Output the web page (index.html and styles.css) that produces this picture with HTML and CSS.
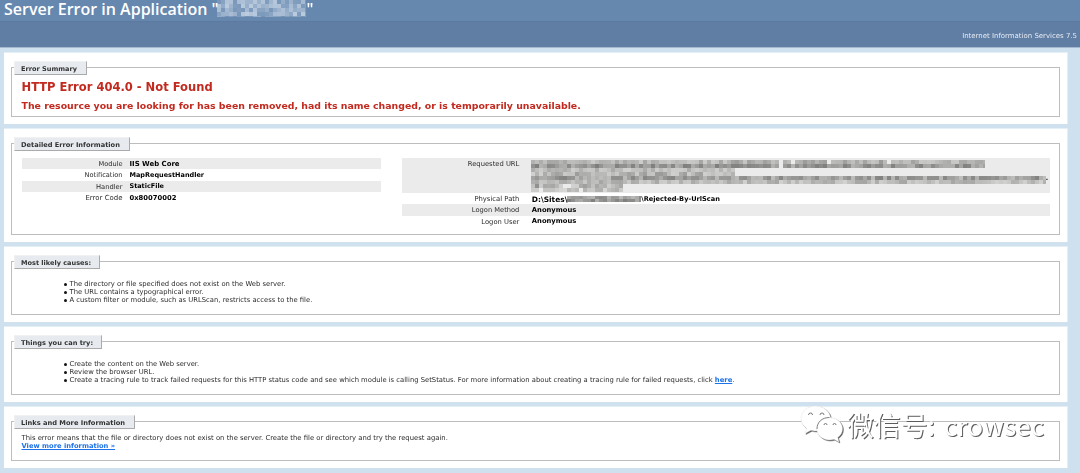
FILE: index.html
```html
<!DOCTYPE html>
<html lang="en">
<head>
<meta charset="utf-8">
<title>IIS 7.5 Detailed Error - 404.0 - Not Found</title>
<link rel="stylesheet" href="styles.css">
</head>
<body>
<header class="title"><h1><span class="fit" data-w="203.5">Server Error in Application</span> <span class="q">"</span><canvas class="mosaic" data-kind="title" width="89" height="17"></canvas><span class="q">"</span></h1></header>
<div class="server"><span class="fit" data-w="115">Internet Information Services 7.5</span></div>
<main>
<section class="panel summary"><div class="box"><h2 class="legend w1"><span class="fit" data-w="56">Error Summary</span></h2>
<h3><span class="fit" data-w="191">HTTP Error 404.0 - Not Found</span></h3>
<h4><span class="fit" data-w="560">The resource you are looking for has been removed, had its name changed, or is temporarily unavailable.</span></h4>
</div></section>
<section class="panel details"><div class="box"><h2 class="legend w2"><span class="fit" data-w="99">Detailed Error Information</span></h2>
<div class="columns">
<dl class="left">
<div class="row alt"><dt><span class="fit" data-w="24">Module</span></dt><dd><span class="fit" data-w="50">IIS Web Core</span></dd></div>
<div class="row"><dt><span class="fit" data-w="38">Notification</span></dt><dd><span class="fit" data-w="74.5">MapRequestHandler</span></dd></div>
<div class="row alt"><dt><span class="fit" data-w="26.5">Handler</span></dt><dd><span class="fit" data-w="34.5">StaticFile</span></dd></div>
<div class="row"><dt><span class="fit" data-w="37">Error Code</span></dt><dd><span class="fit" data-w="47">0x80070002</span></dd></div>
</dl>
<dl class="right">
<div class="row alt url"><dt><span class="fit" data-w="51.5">Requested URL</span></dt><dd><canvas class="mosaic" data-kind="url" width="515" height="32"></canvas><span class="dot">.</span></dd></div>
<div class="row"><dt><span class="fit" data-w="45">Physical Path</span></dt><dd><span class="fit" data-w="35.5">D:\Sites\</span><canvas class="mosaic" data-kind="path" width="74" height="6"></canvas><span class="fit" data-w="78.5">\Rejected-By-UrlScan</span></dd></div>
<div class="row alt"><dt><span class="fit" data-w="47.5">Logon Method</span></dt><dd><span class="fit" data-w="44.5">Anonymous</span></dd></div>
<div class="row"><dt><span class="fit" data-w="38">Logon User</span></dt><dd><span class="fit" data-w="44.5">Anonymous</span></dd></div>
</dl>
</div></div></section>
<section class="panel causes"><div class="box"><h2 class="legend w3"><span class="fit" data-w="70">Most likely causes:</span></h2>
<ul>
<li><span class="fit" data-w="216">The directory or file specified does not exist on the Web server.</span></li>
<li><span class="fit" data-w="134">The URL contains a typographical error.</span></li>
<li><span class="fit" data-w="243.5">A custom filter or module, such as URLScan, restricts access to the file.</span></li>
</ul></div></section>
<section class="panel causes"><div class="box"><h2 class="legend w4"><span class="fit" data-w="72">Things you can try:</span></h2>
<ul>
<li><span class="fit" data-w="129.5">Create the content on the Web server.</span></li>
<li><span class="fit" data-w="85">Review the browser URL.</span></li>
<li><span class="fit" data-w="665">Create a tracing rule to track failed requests for this HTTP status code and see which module is calling SetStatus. For more information about creating a tracing rule for failed requests, click <a href="#">here</a>.</span></li>
</ul></div></section>
<section class="panel links"><div class="box"><h2 class="legend w5"><span class="fit" data-w="104">Links and More Information</span></h2>
<p><span class="fit" data-w="426">This error means that the file or directory does not exist on the server. Create the file or directory and try the request again.</span></p>
<p><a href="#"><span class="fit" data-w="93.5">View more information »</span></a></p>
</div></section>
</main>
<div class="watermark">
<svg width="44" height="40" viewBox="0 0 44 40">
<g fill="#fff" stroke-linejoin="round">
<path class="bubble" d="M15.500 1C7.200 1 1 6.500 1 13.500c0 4 2 7.300 5.500 9.700L5 28.500l6-3.200c2 .5 3 .7 5 .7 8 0 14.500-5.500 14.500-12.500S23.500 1 15.500 1z"/>
<path class="bubble" d="M29.500 12.500c-7.200 0-12.700 5-12.700 11.300S22.300 35 29.500 35c1.700 0 3-.2 4.500-.7l5 2.700-1.300-4.500c3-2.200 4.800-5 4.800-8.700 0-6.300-5.800-11.300-13-11.300z"/>
</g>
<path d="M17 24C17 17 22 12.500 29.500 12.500" fill="none" stroke="#777" stroke-width=".9"/>
<g fill="none" stroke="#777" stroke-width="1">
<path d="M8.500 10a2 2 0 0 1 4 0M20 10a2 2 0 0 1 4 0M24 20a1.500 1.500 0 0 1 3 0M33 20a1.500 1.500 0 0 1 3 0"/>
</g>
</svg>
<span class="cn fit" data-w="88">微信号:</span><span class="en fit" data-w="100">crowsec</span>
</div>
<script src="page.js"></script>
</body>
</html>
```
FILE: styles.css
```css
* { box-sizing: border-box; margin: 0; padding: 0; }
body { background: #cfe1ee; color: #2b2b2b; font: 6.2px/8px "DejaVu Sans", Verdana, sans-serif; width: 1080px; height: 473px; overflow: hidden; position: relative; }
.fit { white-space: nowrap; }
.title { height: 21px; background: #6688af; padding-left: 4px; }
.title h1 { display: flex; align-items: flex-start; color: #fff; font: 600 16px/18px "Open Sans", "Trebuchet MS", sans-serif; }
.title .fit { line-height: 18px; }
.title .q { margin-left: 4px; }
.title .q + .mosaic { display: block; margin-left: -1px; }
.title .mosaic + .q { margin-left: 0; }
.server { height: 26.500px; background: #607da3; border-top: 1px solid #5c7a9f; border-bottom: 1px solid #a4b9d0; color: #e4ebf3; font: 6.800px/28px "DejaVu Sans", sans-serif; text-align: right; padding-right: 3px; }
main { padding: 4.500px 12px 0 4px; display: flex; flex-direction: column; gap: 4px; }
.panel { background: #fff; border-top: 1px solid #e3eff6; border-right: 1px solid #e3eff6; padding: 14px 7px 7px; height: 76px; }
.summary { height: 72px; }
.details { height: 114px; }
.links { height: 62px; }
.box { height: 100%; border: 1px solid #bdbdbd; padding: 0 9px 0 9.500px; }
.legend { height: 14px; margin: -7px 0 0 -7.500px; background: #e7ebf0; border: 1px solid #f1f1f1; border-right-color: #aaa; border-bottom-color: #aaa; font: bold 6.200px/13px "DejaVu Sans", sans-serif; padding-left: 6px; color: #333; }
.w1 { width: 73px; } .w2 { width: 116px; } .w3 { width: 86px; } .w4 { width: 88px; } .w5 { width: 121px; }
h3 { font: bold 11.500px/15px "DejaVu Sans", sans-serif; color: #c22a1f; margin-top: 5px; }
h4 { font: bold 9.200px/12px "DejaVu Sans", sans-serif; color: #c22a1f; margin-top: 5px; }
.columns { display: flex; gap: 21px; margin-top: 7px; }
.left { width: 360px; }
.right { width: 648px; }
.row { display: flex; height: 11.400px; line-height: 11.400px; }
.alt { background: #ebebeb; }
.url { height: 35px; }
dt { width: 101px; text-align: right; }
.right dt { width: 117px; }
dd { flex: 1; display: flex; align-items: center; margin-left: 7px; font-weight: bold; color: #000; padding-top: 1px; }
.right dd { margin-left: 12.500px; }
.right .url dd { margin-left: 11.500px; align-items: flex-start; padding-top: 2px; }
.dot { padding-top: 12px; }
ul { list-style: none; margin-top: 11px; padding-left: 41px; }
li { height: 8px; display: flex; align-items: center; }
li::before { content: ""; width: 3px; height: 3px; border-radius: 50%; background: #111; margin: 0 3px 0 1px; }
a { color: #1e73e8; font-weight: bold; }
.links p { height: 8px; }
.links .legend + p { margin-top: 5px; }
.watermark { position: absolute; left: 800px; top: 405px; display: flex; color: #fff; filter: drop-shadow(1px 1px .4px #5c5c5c); }
.watermark svg { display: block; }
.bubble { stroke: #ddd; stroke-width: .4; }
.cn { margin-left: 3px; font: 400 25px/40px "Noto Sans CJK SC", sans-serif; width: 97px; }
.en { font: 400 25px/40px "Noto Sans CJK SC", sans-serif; }
```
FILE: page.js
```js
// Scale the type size so every text run fills its intended measure.
document.querySelectorAll('.fit').forEach(function (el) {
  var r = document.createRange();
  r.selectNodeContents(el);
  for (var i = 0; i < 3; i++) {
    var w = r.getBoundingClientRect().width;
    var s = parseFloat(getComputedStyle(el).fontSize);
    el.style.fontSize = (s * el.dataset.w / w) + 'px';
  }
});
// Pixelated redaction blocks.
var seed = 17;
function rnd() { seed = (seed * 16807) % 2147483647; return seed / 2147483647; }
document.querySelectorAll('.mosaic').forEach(function (c) {
  var g = c.getContext('2d');
  function strip(x0, x1, y, h, lo, hi, step, keep) {
    for (var x = x0; x < x1; x += step) {
      var v = Math.round(lo + rnd() * (hi - lo));
      if (rnd() > keep) continue;
      g.fillStyle = 'rgb(' + v + ',' + v + ',' + (v - 1) + ')';
      g.fillRect(x, y, Math.min(step, x1 - x), h);
    }
  }
  if (c.dataset.kind === 'title') {
    for (var y = 0; y < 17; y += 4) for (var x = 0; x < 89; x += 4) {
      var t = y > 12 ? rnd() * .3 + .1 : rnd() * .55 + .15;
      g.fillStyle = 'rgba(225,233,243,' + t + ')';
      g.fillRect(x, y, 4, 4);
    }
  } else if (c.dataset.kind === 'path') {
    strip(0, 74, 0, 3, 135, 190, 4, 1);
    strip(0, 74, 3, 3, 125, 175, 4, 1);
  } else {
    strip(0, 200, 0, 4, 165, 205, 4, 1);
    strip(200, 454, 0, 4, 155, 200, 4, .97);
    strip(0, 454, 4, 4, 125, 180, 4, .98);
    strip(0, 204, 8, 4, 170, 210, 4, 1);
    strip(0, 204, 12, 4, 155, 210, 4, 1);
    strip(0, 515, 16, 4, 130, 190, 4, .99);
    strip(0, 515, 20, 4, 165, 210, 4, .99);
    strip(0, 92, 24, 4, 145, 210, 4, .9);
    strip(0, 92, 28, 4, 175, 220, 4, .9);
  }
});
```
